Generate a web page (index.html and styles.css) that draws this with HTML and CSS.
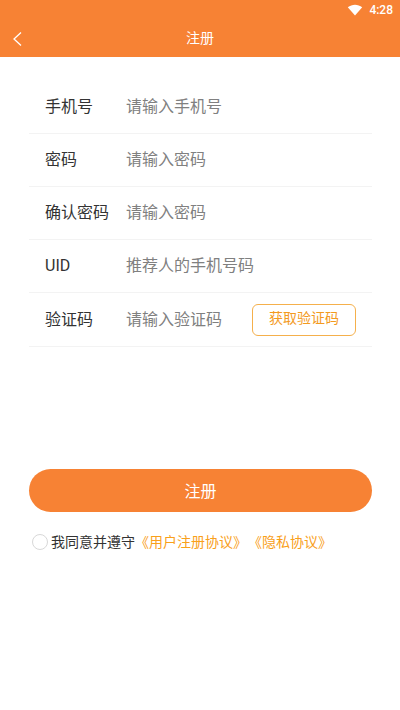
FILE: index.html
```html
<!DOCTYPE html>
<html lang="zh-CN">
<head>
<meta charset="utf-8">
<meta name="viewport" content="width=device-width, initial-scale=1">
<title>注册</title>
<link rel="stylesheet" href="styles.css">
</head>
<body>
<header class="header">
  <div class="status">
    <svg class="wifi" viewBox="0 0 16 12" aria-hidden="true"><path d="M0.8 3.2C5 -0.2 11 -0.2 15.2 3.2L8 11.6Z"/></svg>
    <span>4:28</span>
  </div>
  <div class="bar">
    <button class="back" type="button" aria-label="返回">
      <svg viewBox="0 0 10 16" aria-hidden="true"><path d="M9 1.5L2 8L9 14.5"/></svg>
    </button>
    <h1 class="title">注册</h1>
  </div>
</header>
<main class="main">
  <form class="form">
    <div class="row">
      <label class="label" for="phone">手机号</label>
      <input class="input" id="phone" type="tel" placeholder="请输入手机号">
    </div>
    <div class="row">
      <label class="label" for="password">密码</label>
      <input class="input" id="password" type="password" placeholder="请输入密码">
    </div>
    <div class="row">
      <label class="label" for="confirm">确认密码</label>
      <input class="input" id="confirm" type="password" placeholder="请输入密码">
    </div>
    <div class="row">
      <label class="label" for="uid">UID</label>
      <input class="input" id="uid" type="text" placeholder="推荐人的手机号码">
    </div>
    <div class="row row-code">
      <label class="label" for="code">验证码</label>
      <input class="input" id="code" type="text" placeholder="请输入验证码">
      <button class="code-button" type="button">获取验证码</button>
    </div>
    <button class="submit" type="submit">注册</button>
    <div class="agreement">
      <input class="radio" id="agree" type="radio">
      <label for="agree">我同意并遵守</label>
      <a href="#terms">《用户注册协议》</a>
      <a href="#privacy">《隐私协议》</a>
    </div>
  </form>
</main>
</body>
</html>
```
FILE: styles.css
```css
* {
  box-sizing: border-box;
}

body {
  margin: 0;
  background: #fff;
  color: #333;
  font-family: Roboto, "Noto Sans CJK SC", sans-serif;
  font-size: 16px;
}

button,
input {
  margin: 0;
  font: inherit;
}

.header {
  background: #f78234;
  color: #fff;
}

.status {
  display: flex;
  align-items: center;
  justify-content: flex-end;
  gap: 6px;
  height: 20px;
  padding: 0 7px;
  font-size: 12px;
  font-weight: 500;
}

.wifi {
  width: 16px;
  height: 12px;
  fill: #fff;
}

.bar {
  display: grid;
  grid-template-columns: 40px 1fr 40px;
  align-items: center;
  height: 37px;
}

.back {
  display: flex;
  padding: 0 12px;
  border: 0;
  background: none;
}

.back svg {
  width: 10px;
  height: 16px;
  fill: none;
  stroke: #fff;
  stroke-width: 1.3;
}

.title {
  margin: 0;
  padding-bottom: 2px;
  font-size: 14px;
  font-weight: 400;
  line-height: 20px;
  text-align: center;
}

.main {
  padding: 24px 28px 0 29px;
}

.row {
  display: flex;
  align-items: center;
  min-height: 53px;
  padding: 10px 16px;
  border-bottom: 1px solid #f3f3f3;
}

.row-code {
  min-height: 54px;
}

.label {
  flex: 0 0 81px;
  line-height: 24px;
}

.input {
  flex: 1;
  min-width: 0;
  padding: 0 0 1px;
  border: 0;
  outline: 0;
  background: none;
  color: #333;
}

.input::placeholder {
  color: #808080;
  opacity: 1;
}

.code-button {
  height: 32px;
  padding: 0 16px 5px;
  border: 1px solid #f5b04c;
  border-radius: 6px;
  background: #fff;
  color: #f39a1e;
  font-size: 14px;
}

.submit {
  display: block;
  width: 100%;
  height: 43px;
  margin-top: 122px;
  padding: 0 0 2px;
  border: 0;
  border-radius: 22px;
  background: #f78234;
  color: #fff;
}

.agreement {
  display: flex;
  align-items: center;
  margin-top: 20px;
  padding-left: 3px;
  font-size: 14px;
  line-height: 20px;
}

.radio {
  width: 16px;
  height: 16px;
  margin-right: 3px;
  border: 1px solid #d8d8d8;
  border-radius: 50%;
  appearance: none;
}

.radio:checked {
  border: 5px solid #f78234;
}

.agreement a {
  color: #f9a01b;
  text-decoration: none;
}

.agreement a + a {
  margin-left: 1px;
}
```
